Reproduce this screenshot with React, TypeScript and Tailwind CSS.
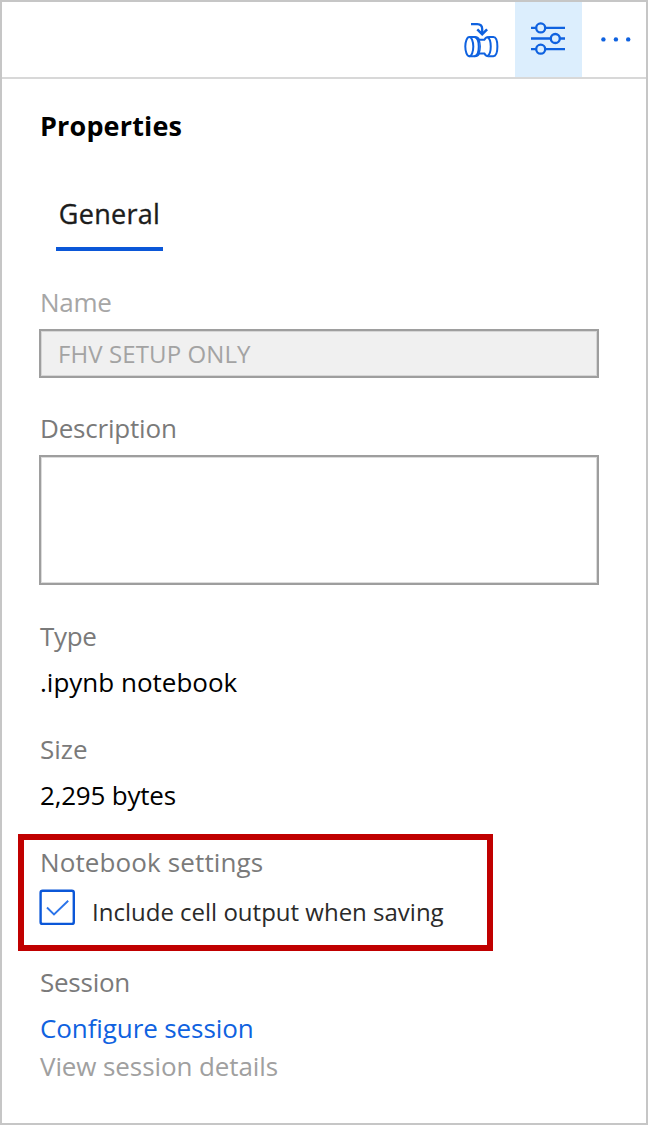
function IntegrateIcon() {
  return (
    <svg width="40" height="40" viewBox="0 0 40 40" fill="none" stroke="#0f62e0" strokeWidth="2">
      <path d="M8 4.2h6.3q4.9 0 4.9 5v4.6" strokeWidth="2.3" />
      <path d="M14.3 9.4l4.9 4.8 4.9-4.8" strokeWidth="2.5" />
      <ellipse cx="6.3" cy="26.6" rx="4" ry="9.6" />
      <path d="M6.3 17h5.7M6.3 36.2h5.7" />
      <path d="M11.4 17c5.8 .8 5.8 18.4 0 19.2" />
      <path d="M12 17c2.6 0 3.2.9 4.2 2.7h5.2c1-1.8 1.6-2.7 4-2.7M12 36.2c2.6 0 3.2-.9 4.2-2.7h5.2c1 1.8 1.6 2.7 4 2.7" />
      <path d="M15.8 19.7c1.9 3.4 1.9 10.4 0 13.8" strokeWidth="1.4" />
      <path d="M24.6 17.2c4.2 2.6 4.2 16.2 0 18.8" />
      <path d="M25.2 17h5.2c5.3 0 5.3 19.2 0 19.2h-5.2" />
    </svg>
  );
}

function SlidersIcon() {
  return (
    <svg width="36" height="36" viewBox="0 0 36 36" fill="none" stroke="#0f62e0" strokeWidth="2.3">
      <path d="M1 7.9h34M1 18.5h34M1 29.2h34" />
      <g fill="#dceefd">
        <circle cx="10.7" cy="7.9" r="4.5" />
        <circle cx="25.3" cy="18.5" r="4.5" />
        <circle cx="10.7" cy="29.2" r="4.5" />
      </g>
    </svg>
  );
}

function Toolbar() {
  return (
    <header className="flex h-[77px] shrink-0 border-b-2 border-[#d8d8d8]">
      <button className="ml-[461px] flex w-[52px] items-start pt-[18px]">
        <IntegrateIcon />
      </button>
      <button className="flex w-[67px] shrink-0 items-start justify-center bg-[#dceefd] pr-px pt-[18px]">
        <SlidersIcon />
      </button>
      <button className="flex w-[64px] items-start justify-center pl-[3px] pt-[34px]">
        <svg width="34" height="6" viewBox="0 0 34 6" fill="#0f62e0">
          <circle cx="4.4" cy="3.4" r="2.2" />
          <circle cx="16.9" cy="3.4" r="2.2" />
          <circle cx="29.2" cy="3.4" r="2.2" />
        </svg>
      </button>
    </header>
  );
}

export default function App() {
  return (
    <div className="flex h-[1125px] w-[648px] flex-col border-2 border-[#c6c6c6] bg-white font-['Open_Sans','Noto_Sans',sans-serif] text-[26px] leading-9 text-[#7a7a7a]">
      <Toolbar />
      <main className="flex flex-col whitespace-nowrap pl-[37px] pr-[47px]">
        <h1 className="mt-[29px] pl-px text-[27px] font-bold tracking-[0.15px] text-black">Properties</h1>
        <div className="ml-[17px] mt-[52px] h-[55px] w-[107px] border-b-4 border-[#0b57d8] text-center text-[27px] tracking-[0.3px] text-[#1c1c1c] [-webkit-text-stroke:0.35px]">
          General
        </div>
        <label className="mt-[33px] pl-px tracking-[-0.3px] text-[#a6a6a6]">Name</label>
        <div className="mt-[9px] flex h-[49px] items-center border-2 border-[#9e9e9e] bg-[#f0f0f0] pl-[17px] pt-px text-[24px] tracking-[0.1px] text-[#a3a3a3] shadow-[inset_0_0_0_1px_#d6d6d6]">
          FHV SETUP ONLY
        </div>
        <label className="mt-8 pl-px tracking-[-0.2px]">Description</label>
        <div className="mt-[9px] h-[130px] border-2 border-[#9e9e9e] shadow-[inset_0_0_0_1px_#dcdcdc]" />
        <div className="mt-[33px] pl-px tracking-[-0.3px]">Type</div>
        <div className="mt-2.5 pl-px text-black">.ipynb notebook</div>
        <div className="mt-[31px] pl-px">Size</div>
        <div className="mt-2.5 pl-px tracking-[-0.2px] text-black">2,295 bytes</div>
        <section className="-ml-[21px] mt-[21px] h-[117px] w-[475px] border-6 border-[#c00000] pl-[15px] pt-1">
          <h2 className="pl-px tracking-[0.12px]">Notebook settings</h2>
          <div className="mt-[9px] flex">
            <svg width="37" height="37" viewBox="0 0 37 37" fill="none">
              <rect x="1.6" y="1.7" width="33.2" height="33.2" rx="2" stroke="#0b57d8" strokeWidth="2.4" />
              <path d="M8 18.5l7 7L29.2 11.7" stroke="#2b74ea" strokeWidth="1.9" />
            </svg>
            <span className="ml-4 mt-[5px] text-[24px] text-[#2a2a2a]">Include cell output when saving</span>
          </div>
        </section>
        <div className="mt-[13px] pl-px tracking-[-0.25px]">Session</div>
        <a className="mt-2.5 pl-px tracking-[-0.1px] text-[#0f62e0]">Configure session</a>
        <a className="mt-0.5 pl-px tracking-[-0.1px] text-[#a0a0a0]">View session details</a>
      </main>
    </div>
  );
}
